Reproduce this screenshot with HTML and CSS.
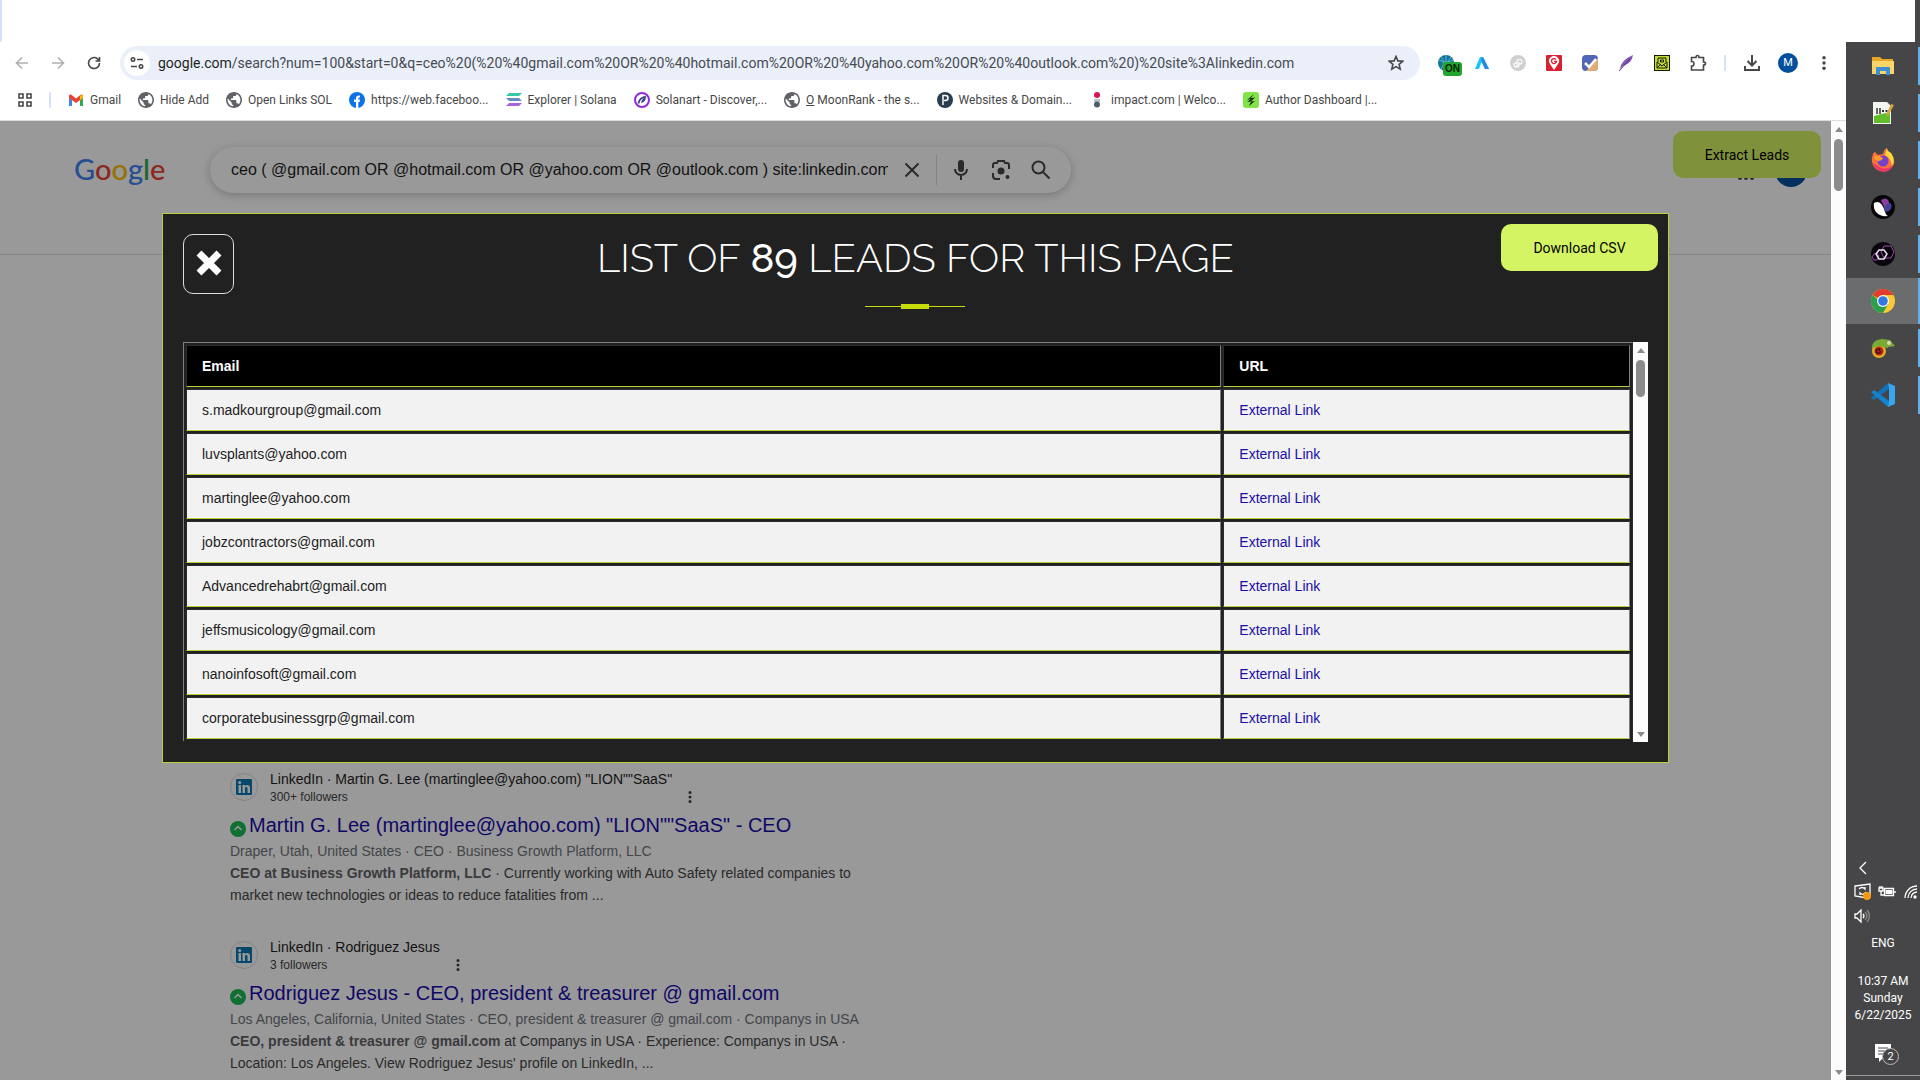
FILE: index.html
```html
<!DOCTYPE html>
<html lang="en">
<head>
<meta charset="utf-8">
<title>Google Search</title>
<link rel="stylesheet" href="styles.css">
</head>
<body>
<svg width="0" height="0" hidden>
  <symbol id="globe" viewBox="2 2 20 20"><path fill="#5f6368" d="M12 2C6.480 2 2 6.480 2 12s4.480 10 10 10 10-4.480 10-10S17.520 2 12 2zm-1 17.930c-3.950-.490-7-3.850-7-7.930 0-.620.080-1.210.210-1.790L9 15v1c0 1.100.900 2 2 2v1.930zm6.900-2.540c-.260-.810-1-1.390-1.900-1.390h-1v-3c0-.550-.450-1-1-1H8v-2h2c.550 0 1-.450 1-1V7h2c1.100 0 2-.900 2-2v-.410c2.930 1.190 5 4.060 5 7.410 0 2.080-.800 3.970-2.100 5.390z"/></symbol>
  <symbol id="dots" viewBox="0 0 16 16"><circle cx="8" cy="2" r="2"/><circle cx="8" cy="8" r="2"/><circle cx="8" cy="14" r="2"/></symbol>
  <symbol id="linkedin" viewBox="0 0 16 16"><rect width="16" height="16" rx="1" fill="#0a77b5"/><path d="M2.500 6H5v8H2.500zM6.500 6H9v1c1.500-2 5-1.300 5 2v5h-2.500V9.500c0-2-2.500-2-2.500 0V14H6.500z" fill="#fff"/><circle cx="3.700" cy="3.500" r="1.500" fill="#fff"/></symbol>
  <symbol id="badge" viewBox="0 0 16 16"><circle cx="8" cy="8" r="8" fill="#1cb955"/><path d="M4.500 9L8 5.500 11.500 9" fill="none" stroke="#fff" stroke-width="1.500"/></symbol>
</svg>

<div class="tabstrip"><div class="tab-space"><span class="tab-edge"></span></div></div>
<div class="desktop">
  <div class="browser">
    <div class="toolbar">
      <button class="tool" aria-label="Back"><svg width="16" height="16" viewBox="0 0 16 16" class="line faint"><path d="M14 8H3M8 2.500L2.500 8 8 13.500"/></svg></button>
      <button class="tool" aria-label="Forward"><svg width="16" height="16" viewBox="0 0 16 16" class="line faint"><path d="M2 8h11M8 2.500L13.500 8 8 13.500"/></svg></button>
      <button class="tool" aria-label="Reload"><svg width="16" height="16" viewBox="0 0 16 16" class="line"><path d="M13.500 8a5.500 5.500 0 1 1-2-4.200L13.500 6M13.500 2v4H9.500"/></svg></button>
      <div class="address">
        <button class="site" aria-label="Site information"><svg width="14" height="14" viewBox="0 0 14 14" class="line"><circle cx="3" cy="3.500" r="1.700"/><path d="M7 3.500h6M1 10.500h6"/><circle cx="11" cy="10.500" r="1.700"/></svg></button>
        <span class="url"><b>google.com</b>/search?num=100&amp;start=0&amp;q=ceo%20(%20%40gmail.com%20OR%20%40hotmail.com%20OR%20%40yahoo.com%20OR%20%40outlook.com%20)%20site%3Alinkedin.com</span>
        <button class="star" aria-label="Bookmark"><svg width="16" height="16" viewBox="0 0 16 16" class="line"><path d="M8 1.500l1.900 4.400 4.800.400-3.600 3.100 1.100 4.700L8 11.600l-4.200 2.500 1.100-4.700L1.300 6.300l4.800-.4z"/></svg></button>
      </div>
      <div class="extensions">
        <button class="tool on-ext" aria-label="Globe extension"><svg width="16" height="16" viewBox="0 0 16 16"><circle cx="8" cy="8" r="8" fill="#17739c"/><path d="M1 5q7 4 14 0M8 0v16M3 2q5 5 0 12M13 2q-5 5 0 12" stroke="#55b6cf" fill="none"/></svg><span class="on">ON</span></button>
        <button class="tool" aria-label="A extension"><svg width="16" height="16" viewBox="0 0 16 16"><path d="M1 14L6 2h3l6 12h-4L7.500 7 5 14z" fill="#16c8ee"/><path d="M9 2l6 12h-4L7 5z" fill="#2787e8"/></svg></button>
        <button class="tool" aria-label="P extension"><svg width="16" height="16" viewBox="0 0 16 16"><circle cx="8" cy="8" r="8" fill="#d0d0d0"/><path d="M7 12V7q0-2.500 2.500-2.500t2.500 2.300-2.500 2.200H9M9 7v3q0 2-2.500 2T4 10t2.500-2.500" stroke="#fff" stroke-width="1.200" fill="none"/></svg></button>
        <button class="tool" aria-label="Maps extension"><svg width="16" height="16" viewBox="0 0 16 16"><rect width="16" height="16" rx="1" fill="#d9202f"/><path d="M8 15L4 9a5 5 0 1 1 8 0z" fill="#fff"/><path d="M10 4.500a2.500 2.500 0 1 0 .5 2H8" fill="none" stroke="#d9202f" stroke-width="1.300"/></svg></button>
        <button class="tool" aria-label="Check extension"><svg width="16" height="16" viewBox="0 0 16 16"><rect width="16" height="16" rx="4" fill="#5366b5"/><path d="M16 3v9a4 4 0 0 1-4 4H4z" fill="#e0ae72"/><path d="M3 8l4 4 7-8" stroke="#fff" stroke-width="2.500" fill="none"/></svg></button>
        <button class="tool" aria-label="Feather extension"><svg width="16" height="16" viewBox="0 0 16 16"><path d="M2 14Q3 5 15 0q-1 8-10 11z" fill="#8554b9"/><path d="M1 16L12 4" stroke="#553080" stroke-width="1"/></svg></button>
        <button class="tool" aria-label="Mail extension"><svg width="16" height="16" viewBox="0 0 16 16"><rect x=".500" y=".500" width="15" height="15" fill="#c5dc32" stroke="#151a08"/><path d="M3 7v6h10V7l-5 4zM3 13l4-4M13 13L9 9M4 7V3h8v4M6.500 5h3v2h-3z" fill="none" stroke="#151a08"/></svg></button>
        <button class="tool" aria-label="Extensions"><svg width="18" height="18" viewBox="0 0 18 18" class="line"><path d="M2.500 3.500H7q0-2 1.500-2t1.500 2h4.500V8q2 0 2 1.500t-2 1.500v5h-12v-4q2.500 0 2.500-2.300T2.500 7.500z"/></svg></button>
        <span class="sep"></span>
        <button class="tool" aria-label="Downloads"><svg width="18" height="18" viewBox="0 0 18 18" class="line heavy"><path d="M9 1v10M4.500 7L9 11.500 13.500 7M2 12v4h14v-4"/></svg></button>
        <button class="tool" aria-label="Profile"><span class="profile">M</span></button>
        <button class="tool" aria-label="Menu"><svg width="14" height="14" viewBox="0 0 16 16" fill="#474747"><use href="#dots"/></svg></button>
      </div>
    </div>

    <nav class="bookmarks">
      <button class="apps" aria-label="Apps"><svg width="14" height="14" viewBox="0 0 14 14" class="line"><path d="M1 1h4v4H1zM9 1h4v4H9zM1 9h4v4H1zM9 9h4v4H9z"/></svg></button>
      <span class="bm-sep"></span>
      <a href="#"><svg width="16" height="16" viewBox="0 0 16 16"><path d="M1 3v11h3V6z" fill="#4285f4"/><path d="M15 3v11h-3V6z" fill="#34a853"/><path d="M1 3l2-.5 5 4 5-4 2 .5v3l-7 5-7-5z" fill="#ea4335"/><path d="M12 4l2-1.500L15 4v2l-3 2z" fill="#fbbc04"/></svg>Gmail</a>
      <a href="#"><svg width="16" height="16"><use href="#globe"/></svg>Hide Add</a>
      <a href="#"><svg width="16" height="16"><use href="#globe"/></svg>Open Links SOL</a>
      <a href="#"><svg width="16" height="16" viewBox="0 0 16 16"><circle cx="8" cy="8" r="8" fill="#0d72e8"/><path d="M7 16V10H5V7.500h2V6q0-3 4-2.500V5.500Q9.300 5.300 9.300 6.500v1H11l-.4 2.500H9.300v6z" fill="#fff"/></svg>https://web.faceboo...</a>
      <a href="#"><svg width="16" height="16" viewBox="0 0 16 16"><path d="M3 1h13l-3 3H0z" fill="#35c9ac"/><path d="M0 6h13l3 3H3z" fill="#668bc5"/><path d="M3 11h13l-3 3H0z" fill="#a765db"/></svg>Explorer | Solana</a>
      <a href="#"><svg width="16" height="16" viewBox="0 0 16 16"><circle cx="8" cy="8" r="7" fill="#fff" stroke="#922be0" stroke-width="2"/><path d="M3.500 11.500Q5 4 12 4q0 6-5 7 0-3 3-5-4 1-4.500 5.500z" fill="#394185"/></svg>Solanart - Discover,...</a>
      <a href="#"><svg width="16" height="16"><use href="#globe"/></svg><span><u>O</u> MoonRank - the s...</span></a>
      <a href="#"><svg width="16" height="16" viewBox="0 0 16 16"><circle cx="8" cy="8" r="8" fill="#2a3e53"/><path d="M6 13V3.500h2.500a2.500 2.500 0 0 1 0 5H7" stroke="#fff" stroke-width="1.500" fill="none"/></svg>Websites &amp; Domain...</a>
      <a href="#"><svg width="16" height="16" viewBox="0 0 16 16"><circle cx="8" cy="3" r="3" fill="#d81159"/><path d="M5 7h6v3H5z" fill="#b9c4cb"/><circle cx="8" cy="12.500" r="3" fill="#4e5d6c"/></svg>impact.com | Welco...</a>
      <a href="#"><svg width="16" height="16" viewBox="0 0 16 16"><rect width="16" height="16" rx="3" fill="#82e348"/><path d="M11 2L4 8l4-1-4 3 4-.5L6 14l6-5-4 .5 4-4-4 .5z" fill="#183312"/></svg>Author Dashboard |...</a>
    </nav>

    <div class="viewport">
      <main class="page">
        <header class="g-header">
          <a class="logo" href="#" aria-label="Google"><span class="blue">G</span><span class="red">o</span><span class="yellow">o</span><span class="blue">g</span><span class="green">l</span><span class="red">e</span></a>
          <form class="search">
            <input type="text" aria-label="Search" value="ceo ( @gmail.com OR @hotmail.com OR @yahoo.com OR @outlook.com ) site:linkedin.com">
            <button type="button" aria-label="Clear"><svg width="24" height="24" viewBox="0 0 24 24" class="line heavy"><path d="M5.500 5.500l13 13M18.500 5.500l-13 13"/></svg></button>
            <span class="search-sep"></span>
            <button type="button" aria-label="Voice"><svg width="24" height="24" viewBox="0 0 24 24" fill="#474747"><rect x="9" y="2" width="6" height="12" rx="3"/><path d="M6 11a6 6 0 0 0 12 0M12 17v5" stroke="#474747" stroke-width="2" fill="none"/></svg></button>
            <button type="button" aria-label="Lens"><svg width="24" height="24" viewBox="0 0 24 24" class="line heavy"><path d="M4 10V7q0-2 2-2h2l1-2h6l1 2h2q2 0 2 2v4M4 15v3q0 3 3 3h4"/><circle cx="12" cy="13" r="2.500" fill="#474747"/><circle cx="18.500" cy="19" r="1" fill="#474747"/></svg></button>
            <button type="button" aria-label="Submit"><svg width="24" height="24" viewBox="0 0 24 24" class="line heavy"><circle cx="9.500" cy="9.500" r="6"/><path d="M14 14l6.500 6.500"/></svg></button>
          </form>
          <div class="account">
            <svg width="16" height="16" viewBox="0 0 16 16" fill="#444"><circle cx="2" cy="14" r="2"/><circle cx="8" cy="14" r="2"/><circle cx="14" cy="14" r="2"/></svg>
            <span class="avatar"></span>
          </div>
          <button class="lime extract">Extract Leads</button>
        </header>
        <section class="results">
          <article>
            <div class="source"><span class="fav"><svg width="16" height="16"><use href="#linkedin"/></svg></span><div><p>LinkedIn · Martin G. Lee (martinglee@yahoo.com) "LION""SaaS"</p><p class="small">300+ followers</p></div><button aria-label="More"><svg width="12" height="12" fill="#444"><use href="#dots"/></svg></button></div>
            <h3><svg width="16" height="16"><use href="#badge"/></svg><a href="#">Martin G. Lee (martinglee@yahoo.com) "LION""SaaS" - CEO</a></h3>
            <p class="meta">Draper, Utah, United States · CEO · Business Growth Platform, LLC</p>
            <p class="snippet"><b>CEO at Business Growth Platform, LLC</b> · Currently working with Auto Safety related companies to market new technologies or ideas to reduce fatalities from ...</p>
          </article>
          <article>
            <div class="source"><span class="fav"><svg width="16" height="16"><use href="#linkedin"/></svg></span><div><p>LinkedIn · Rodriguez Jesus</p><p class="small">3 followers</p></div><button aria-label="More"><svg width="12" height="12" fill="#444"><use href="#dots"/></svg></button></div>
            <h3><svg width="16" height="16"><use href="#badge"/></svg><a href="#">Rodriguez Jesus - CEO, president &amp; treasurer @ gmail.com</a></h3>
            <p class="meta">Los Angeles, California, United States · CEO, president &amp; treasurer @ gmail.com · Companys in USA</p>
            <p class="snippet"><b>CEO, president &amp; treasurer @ gmail.com</b> at Companys in USA · Experience: Companys in USA · Location: Los Angeles. View Rodriguez Jesus' profile on LinkedIn, ...</p>
          </article>
        </section>

        <div class="overlay">
          <div class="modal" role="dialog" aria-label="Leads">
            <div class="modal-head">
              <button class="close" aria-label="Close"><svg width="26" height="26" viewBox="0 0 26 26"><path d="M3 3l20 20M23 3L3 23" stroke="#fff" stroke-width="7"/></svg></button>
              <div class="title"><h1>LIST OF <b>89</b> LEADS FOR THIS PAGE</h1><span class="rule"></span></div>
              <button class="lime download">Download CSV</button>
            </div>
            <div class="list">
              <table>
                <thead><tr><th class="email">Email</th><th>URL</th></tr></thead>
                <tbody>
                  <tr><td>s.madkourgroup@gmail.com</td><td><a href="#">External Link</a></td></tr>
                  <tr><td>luvsplants@yahoo.com</td><td><a href="#">External Link</a></td></tr>
                  <tr><td>martinglee@yahoo.com</td><td><a href="#">External Link</a></td></tr>
                  <tr><td>jobzcontractors@gmail.com</td><td><a href="#">External Link</a></td></tr>
                  <tr><td>Advancedrehabrt@gmail.com</td><td><a href="#">External Link</a></td></tr>
                  <tr><td>jeffsmusicology@gmail.com</td><td><a href="#">External Link</a></td></tr>
                  <tr><td>nanoinfosoft@gmail.com</td><td><a href="#">External Link</a></td></tr>
                  <tr><td>corporatebusinessgrp@gmail.com</td><td><a href="#">External Link</a></td></tr>
                </tbody>
              </table>
              <div class="scrollbar"><i class="up"></i><i class="thumb short"></i><i class="down"></i></div>
            </div>
          </div>
        </div>
      </main>
      <div class="scrollbar"><i class="up"></i><i class="thumb"></i><i class="down"></i></div>
    </div>
  </div>

  <aside class="taskbar">
    <div class="apps-list">
      <button class="app" aria-label="File Explorer"><svg width="24" height="24" viewBox="0 0 24 24"><path d="M1 3h8l2 2h11v15H1z" fill="#e8a624"/><path d="M1 7h22v13H1z" fill="#fcd468"/><path d="M5 21v-7q0-1 1-1h12q1 0 1 1v7h-4v-4H9v4z" fill="#3d8fd3"/></svg></button>
      <button class="app" aria-label="Notepad++"><svg width="24" height="24" viewBox="0 0 24 24"><path d="M2 1h14l4 4v18H2z" fill="#f4f6f1"/><path d="M3 15q7-2 16-4v11H3z" fill="#62bd2c"/><path d="M6 7v6M9 7v6" stroke="#333" stroke-width="1.500"/><path d="M11 10h2M14.500 10h2" stroke="#333" stroke-width="2"/><path d="M15 14l5-11 3 1-6 11z" fill="#d8a33c"/></svg></button>
      <button class="app" aria-label="Firefox"><svg width="24" height="24" viewBox="0 0 24 24"><path d="M1 10Q2 4 4 4l3 3 5-1Q13 1 16 0q0 3 4 5 7 10-1 16-7 5-14 0-5-5-4-11z" fill="#ff7139"/><path d="M16 0q0 3 4 5 5 7 1 13-1-8-7-11z" fill="#ffd83d"/><path d="M2 15q3 8 11 9 7-1 9-7-5 5-12 3z" fill="#f0346b"/><circle cx="12" cy="13" r="5.500" fill="#7542c9"/><path d="M3 8q5-1 9 2-1 3-5 3-4-1-4-5z" fill="#ff9a2f"/></svg></button>
      <button class="app" aria-label="Petal"><svg width="24" height="24" viewBox="0 0 24 24"><circle cx="12" cy="12" r="12" fill="#060609"/><path d="M10 5q6-4 8 2 0 5-4 7z" fill="#8c3fa0"/><path d="M13 14q1-6 7-6 2 8-5 9z" fill="#454398"/><path d="M3 8q5-3 8 2 2 3 3 7 1 3 3 4-8 1-12-4-3-4-2-9z" fill="#fff"/></svg></button>
      <button class="app" aria-label="Rings"><svg width="24" height="24" viewBox="0 0 24 24"><circle cx="12" cy="12" r="12" fill="#08050d"/><path d="M13 4h7l3 6-3 6h-7l-3-6zM3 12l3-1 2 3-2 4H3l-2-3z" fill="none" stroke="#a14aa8"/><path d="M8 8h5l3 4-3 5H8l-3-5z" fill="none" stroke="#e8e2ee" stroke-width="1.500"/></svg></button>
      <button class="app active" aria-label="Chrome"><svg width="24" height="24" viewBox="0 0 24 24"><circle cx="12" cy="12" r="12" fill="#fcc934"/><path d="M12 12L1.600 6a12 12 0 0 1 20.800 0z" fill="#e33b2e"/><path d="M1.600 6a12 12 0 0 0 10.400 18l5.200-9H12z" fill="#2b9f4b"/><path d="M12 6h10.400L17 15z" fill="#fcc934"/><circle cx="12" cy="12" r="6" fill="#fff"/><circle cx="12" cy="12" r="4.800" fill="#3478e5"/></svg></button>
      <button class="app" aria-label="Chameleon"><svg width="24" height="24" viewBox="0 0 24 24"><path d="M1 14Q0 4 11 3l8 1 5 6-6 1-6-1-6 1z" fill="#78aa35"/><circle cx="8" cy="15" r="7" fill="#e5ae20"/><circle cx="8" cy="15" r="4.500" fill="#b52520"/><path d="M8 15q2-2-1-2-3 1-1 4 3 1 4-2" fill="none" stroke="#390f0f" stroke-width="1.300"/><path d="M1 13Q1 6 9 6l8 1v5l-5-1q-6-3-11 2z" fill="#78aa35"/><circle cx="18" cy="7" r="2" fill="#d8ddb0"/></svg></button>
      <button class="app" aria-label="VS Code"><svg width="24" height="24" viewBox="0 0 24 24"><path d="M17 0L0 15l3 2L18 6z" fill="#1173b5"/><path d="M17 24L0 9l3-2 15 11z" fill="#1684cd"/><path d="M17 0l7 3v18l-7 3 1-6V6z" fill="#36a7ed"/></svg></button>
    </div>
    <div class="tray">
      <div class="tray-icons">
        <button aria-label="Show hidden icons"><svg width="18" height="18" viewBox="0 0 18 18" class="tray-line"><path d="M12 3L6 9l6 6"/></svg></button>
      </div>
      <div class="tray-icons">
        <button aria-label="Update"><svg width="18" height="18" viewBox="0 0 18 18" class="tray-line"><path d="M1 3l15-2v13l-3 1-12-2zM5 6q3-3 6 0V4M12 9q-3 4-6 1v2"/><circle cx="13" cy="13" r="4" fill="#f59a0c" stroke="none"/></svg></button>
        <button aria-label="Battery"><svg width="18" height="18" viewBox="0 0 18 18" class="tray-line"><path d="M1 5h4v3H1zM3 8v4h3M2 3v2M4 3v2M6.500 5.500h9v7h-9zM17 8v2"/><path d="M7.500 7h7v4h-7z" fill="#fff" stroke="none"/></svg></button>
        <button aria-label="Wi-Fi"><svg width="18" height="18" viewBox="0 0 18 18" class="tray-line"><path d="M3 15A12 12 0 0 1 15 3M6 15a9 9 0 0 1 9-9M9 15a6 6 0 0 1 6-6"/><circle cx="13" cy="14" r="1" fill="#fff"/></svg></button>
      </div>
      <div class="tray-icons">
        <button aria-label="Volume"><svg width="18" height="18" viewBox="0 0 18 18" class="tray-line"><path d="M1 7h2l4-4v12l-4-4H1zM9 7q2 2 0 4"/><path d="M11 5q4 4 0 8M13 3q5 6 0 12" stroke="#888"/></svg></button>
      </div>
      <span class="lang">ENG</span>
      <div class="clock"><span>10:37 AM</span><span>Sunday</span><span>6/22/2025</span></div>
      <button class="notes" aria-label="Notifications"><svg width="24" height="26" viewBox="0 0 24 26"><path d="M1 2h16v14H9l-4 4v-4H1z" fill="#fff"/><path d="M4 6h10M4 9h10M4 12h7" stroke="#464648"/></svg><span class="count">2</span></button>
    </div>
  </aside>
</div>
</body>
</html>
```
FILE: styles.css
```css
* { box-sizing: border-box; }
body {
  margin: 0;
  height: 100vh;
  display: flex;
  flex-direction: column;
  overflow: hidden;
  background: #fff;
  font-family: "Liberation Sans", Arial, sans-serif;
  font-size: 14px;
}
button { padding: 0; border: 0; background: none; font: inherit; color: inherit; }
a { color: inherit; text-decoration: none; }
p, h1, h3 { margin: 0; font-weight: 400; }
svg { flex: none; display: block; }
.line { fill: none; stroke: #474747; stroke-width: 1.6; }
.heavy { stroke-width: 2; }
.faint { stroke: #b0b0b0; }

.tabstrip { height: 42px; flex: none; background: #464648; padding-right: 5px; }
.tab-space { height: 100%; background: #fff; }
.tab-edge { display: block; width: 2px; height: 100%; background: #d5e0fb; border-bottom-right-radius: 2px; }
.desktop { flex: 1; display: flex; min-height: 0; }
.browser { flex: 1; min-width: 0; display: flex; flex-direction: column; }

/* browser chrome */
.toolbar { height: 42px; flex: none; display: flex; align-items: center; padding: 0 4px; font-family: "Roboto", "Noto Sans", sans-serif; }
.tool { width: 36px; height: 34px; display: grid; place-items: center; }
.address { flex: 1; height: 34px; margin-left: 8px; margin-right: 8px; padding: 0 16px 0 4px; border-radius: 17px; background: #eaeffa; display: flex; align-items: center; gap: 8px; min-width: 0; }
.site { width: 26px; height: 26px; border-radius: 13px; background: #fff; display: grid; place-items: center; }
.url { flex: 1; white-space: nowrap; overflow: hidden; color: #474b52; font-size: 14px; }
.url b { font-weight: 400; color: #1f1f1f; }
.extensions { display: flex; align-items: center; }
.on-ext { position: relative; }
.on { position: absolute; left: 15px; top: 16px; padding: 0 2px; border-radius: 3px; background: #22a52e; color: #062408; font: 700 10px/14px "Liberation Sans", sans-serif; }
.sep { width: 2px; height: 16px; margin: 0 8px; background: #d5e2fb; }
.profile { width: 20px; height: 20px; border-radius: 10px; background: #05509c; color: #fff; font-size: 11px; line-height: 20px; }
.bookmarks { height: 37px; flex: none; display: flex; align-items: center; gap: 17px; padding: 0 18px 4px; border-bottom: 1px solid #dadce0; font: 12px/16px "Roboto", "Noto Sans", sans-serif; color: #474747; white-space: nowrap; }
.bookmarks a { display: flex; align-items: center; gap: 6px; }
.bm-sep { width: 2px; height: 16px; background: #d5e2fb; }

/* scrollbars */
.scrollbar { width: 15px; flex: none; background: #fcfcfc; display: flex; flex-direction: column; align-items: center; padding: 6px 0 5px; }
.scrollbar .up { border: 4px solid transparent; border-top: 0; border-bottom: 5px solid #8b8b8b; }
.scrollbar .down { border: 4px solid transparent; border-bottom: 0; border-top: 5px solid #8b8b8b; margin-top: auto; }
.thumb { width: 9px; height: 52px; margin-top: 7px; border-radius: 5px; background: #8b8b8b; }
.thumb.short { height: 37px; }

/* search page */
.viewport { flex: 1; display: flex; min-height: 0; }
.page { position: relative; flex: 1; min-width: 0; overflow: hidden; }
.g-header { height: 134px; padding: 26px 10px 0 74px; display: flex; align-items: flex-start; border-bottom: 1px solid #dadce0; }
.logo { width: 136px; font: 500 29px/44px "Lato", sans-serif; }
.blue { color: #4285f4; } .red { color: #ea4335; } .yellow { color: #fbbc05; } .green { color: #34a853; }
.search { width: 861px; height: 46px; border-radius: 23px; padding: 0 18px 0 21px; box-shadow: 0 2px 8px rgba(60,64,67,.3); display: flex; align-items: center; }
.search input { flex: 1; min-width: 0; border: 0; padding: 0; background: none; font: 16px/24px "Liberation Sans", Arial, sans-serif; color: #1f1f1f; outline: 0; }
.search button { width: 24px; height: 24px; margin-right: 16px; }
.search button:first-of-type { margin: 0 12px; }
.search button:last-child { margin-right: 0; }
.search-sep { width: 1px; height: 30px; background: #dadce0; margin-right: 12px; }
.account { margin-left: auto; padding: 14px 14px 0 0; display: flex; gap: 21px; align-items: flex-start; }
.account svg { margin-top: 3px; }
.avatar { width: 32px; height: 32px; margin-top: -6px; border-radius: 16px; background: #05509c; }
.lime { height: 47px; border-radius: 10px; background: #d4f463; color: #000; font: 14px/20px "Roboto", sans-serif; }
.extract { position: absolute; top: 10px; right: 10px; width: 148px; }

.results { width: 860px; padding: 512px 0 0 230px; color: #444; }
.results article { height: 168px; }
.source { display: flex; align-items: center; gap: 12px; height: 40px; color: #1f1f1f; line-height: 20px; }
.small { font-size: 12px; line-height: 16px; color: #444; }
.fav { width: 28px; height: 28px; border: 1px solid #d8dade; border-radius: 14px; display: grid; place-items: center; }
.source button { align-self: flex-end; padding-bottom: 4px; }
.results h3 { display: flex; align-items: center; gap: 3px; margin-top: 5px; font-size: 20px; line-height: 26px; color: #1a0dab; }
.results h3 svg { margin-top: 8px; }
.meta { color: #70757a; line-height: 22px; margin-top: 2px; white-space: nowrap; }
.snippet { line-height: 22px; color: #474747; }
.snippet b { color: #5f6368; }

/* leads dialog */
.overlay { position: absolute; inset: 0; padding: 92px 162px; background: rgba(0,0,0,.4); }
.modal { background: #212121; border: 1px solid #b2d235; }
.modal-head { display: grid; grid-template-columns: 1fr auto 1fr; align-items: start; height: 128px; padding: 10px; }
.close { width: 51px; height: 60px; margin: 10px; border: 1px solid #ddd; border-radius: 10px; display: grid; place-items: center; padding-bottom: 2px; }
.title { display: grid; justify-items: center; color: #fff; }
.title h1 { font: 300 40px/48px "Raleway", "Lato", sans-serif; margin-top: 10px; }
.title b { font-weight: 500; }
.rule { width: 100px; height: 5px; margin-top: 22px; background: linear-gradient(#c5db0a, #c5db0a) center / 28px 5px no-repeat, linear-gradient(#c5db0a, #c5db0a) center / 100px 1px no-repeat; }
.download { justify-self: end; width: 157px; }
.list { margin: 0 20px 20px; display: flex; min-height: 400px; }
table { flex: 1; align-self: flex-start; border: 1px solid #808080; border-bottom: 0; border-right-color: #2c2c2c; border-collapse: separate; border-spacing: 2px; color: #222; }
th, td { height: 42px; padding: 12px 15px; border: 1px solid #2c2c2c; border-right-color: #808080; border-bottom-color: #b2d235; text-align: left; line-height: 16px; background: #f2f2f2; background-clip: padding-box; }
th { background-color: #000; color: #fff; }
.email { width: 71.8%; }
td a { color: #1a0dab; }

/* desktop taskbar */
.taskbar { width: 74px; flex: none; background: #464648; display: flex; flex-direction: column; justify-content: space-between; overflow: hidden; color: #fff; font-family: "Roboto", "Noto Sans", sans-serif; }
.apps-list { display: grid; gap: 1px; padding-top: 1px; }
.app { height: 46px; display: grid; place-items: center; background: linear-gradient(#67afe8, #67afe8) right center / 2px 38px no-repeat; }
.app.active { background: linear-gradient(#67afe8, #67afe8) right center / 2px 46px no-repeat, #6b6c6e; }
.tray { border-bottom: 4px solid #464648; height: 224px; }
.tray-icons { display: flex; gap: 6px; height: 24px; padding-left: 8px; }
.tray-line { fill: none; stroke: #fff; stroke-width: 1.3; }
.lang { display: block; text-align: center; font-size: 12px; line-height: 18px; margin-top: 6px; }
.clock { display: grid; text-align: center; font-size: 12px; line-height: 17px; margin-top: 21px; }
.notes { position: relative; display: block; width: 74px; height: 46px; border-bottom: 1px solid #999; padding: 10px 0 0 28px; margin-top: 6px; }
.notes svg { margin-top: -6px; }
.count { position: absolute; left: 36px; top: 18px; width: 17px; height: 17px; border: 1px solid #bbb; border-radius: 9px; background: #464648; font-size: 11px; line-height: 15px; text-align: center; }
```
